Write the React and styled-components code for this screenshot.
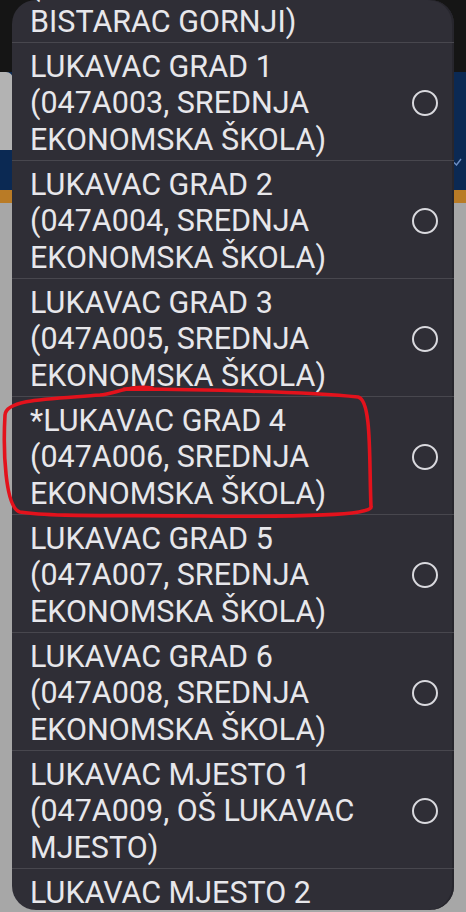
import React from 'react';
import styled, { createGlobalStyle } from 'styled-components';

// --- polling stations shown in the picker ---
const stations = [
  { id: 0, label: 'BISTARAC GORNJI 2\n(047A002, PŠ\nBISTARAC GORNJI)' },
  { id: 1, label: 'LUKAVAC GRAD 1\n(047A003, SREDNJA\nEKONOMSKA ŠKOLA)' },
  { id: 2, label: 'LUKAVAC GRAD 2\n(047A004, SREDNJA\nEKONOMSKA ŠKOLA)' },
  { id: 3, label: 'LUKAVAC GRAD 3\n(047A005, SREDNJA\nEKONOMSKA ŠKOLA)' },
  { id: 4, label: '*LUKAVAC GRAD 4\n(047A006, SREDNJA\nEKONOMSKA ŠKOLA)' },
  { id: 5, label: 'LUKAVAC GRAD 5\n(047A007, SREDNJA\nEKONOMSKA ŠKOLA)' },
  { id: 6, label: 'LUKAVAC GRAD 6\n(047A008, SREDNJA\nEKONOMSKA ŠKOLA)' },
  { id: 7, label: 'LUKAVAC MJESTO 1\n(047A009, OŠ LUKAVAC\nMJESTO)' },
  { id: 8, label: 'LUKAVAC MJESTO 2\n(047A010, OŠ LUKAVAC\nMJESTO)' },
];

const GlobalStyle = createGlobalStyle`
  html, body {
    margin: 0;
    padding: 0;
    background: #a7a7a7;
  }
  * { box-sizing: border-box; }
`;

const Screen = styled.div`
  position: relative;
  width: 466px;
  height: 912px;
  overflow: hidden;
  font-family: Roboto, "Noto Sans", Arial, sans-serif;
`;

// --- dimmed app behind the dialog ---
const Backdrop = styled.div`
  display: flex;
  flex-direction: column;
  height: 100%;
`;

const StatusBar = styled.div`
  height: 72px;
  background: #151515;
`;

const Header = styled.div`
  height: 118px;
  background: #0b2953;
  display: flex;
  justify-content: space-between;
  align-items: flex-start;
`;

const FieldEdge = styled.div`
  width: 13px;
  height: 78px;
  background: #b3b3b3;
  border-top-right-radius: 7px;
`;

const Check = styled.svg`
  margin-top: 86px;
  margin-right: 4px;
`;

const AccentStrip = styled.div`
  height: 13px;
  background: #b97b26;
`;

const Body = styled.div`
  flex: 1;
  background: #a7a7a7;
`;

// --- picker dialog ---
const Dialog = styled.div`
  position: absolute;
  left: 12px;
  top: 0;
  width: 442px;
  height: 910px;
  background: #2f2e36;
  border-radius: 24px;
  overflow: hidden;
  box-shadow: inset -2px 0 0 #27262d;
`;

const List = styled.ul`
  list-style: none;
  margin: -76px 0 0;
  padding: 0;
`;

const Row = styled.li`
  display: flex;
  align-items: center;
  gap: 12px;
  padding: 5.5px 16px 2px 18px;
  border-top: 1px solid #48474e;
`;

const Label = styled.span`
  flex: 1;
  white-space: pre-line;
  color: #e7e7eb;
  font-size: 30.5px;
  line-height: 36.5px;
`;

const Radio = styled.span`
  flex: none;
  width: 26px;
  height: 26px;
  border-radius: 50%;
  border: 2.5px solid #d9d9de;
`;

const Annotation = styled.svg`
  position: absolute;
  left: 0;
  top: 0;
  pointer-events: none;
`;

export default function App() {
  return (
    <>
      <GlobalStyle />
      <Screen>
        <Backdrop>
          <StatusBar />
          <Header>
            <FieldEdge />
            <Check width="9" height="8" viewBox="0 0 9 8">
              <path d="M1 4.5 L3.5 7 L8 1" fill="none" stroke="#6f8fc4" strokeWidth="1.4" />
            </Check>
          </Header>
          <AccentStrip />
          <Body />
        </Backdrop>

        <Dialog>
          <List>
            {stations.map((s) => (
              <Row key={s.id}>
                <Label>{s.label}</Label>
                <Radio />
              </Row>
            ))}
          </List>
        </Dialog>

        <Annotation width="466" height="912" viewBox="0 0 466 912">
          <path
            d="M124 389 C170 389 300 391 358 397 C372 400 369 460 371 507 C372 515 300 517 200 516 C120 515 50 517 20 512 C5 508 3 450 5 415 C6 399 50 399 100 395 C116 393 132 385 152 388"
            fill="none"
            stroke="#e3121c"
            strokeWidth="3.6"
            strokeLinecap="round"
            strokeLinejoin="round"
          />
        </Annotation>
      </Screen>
    </>
  );
}
